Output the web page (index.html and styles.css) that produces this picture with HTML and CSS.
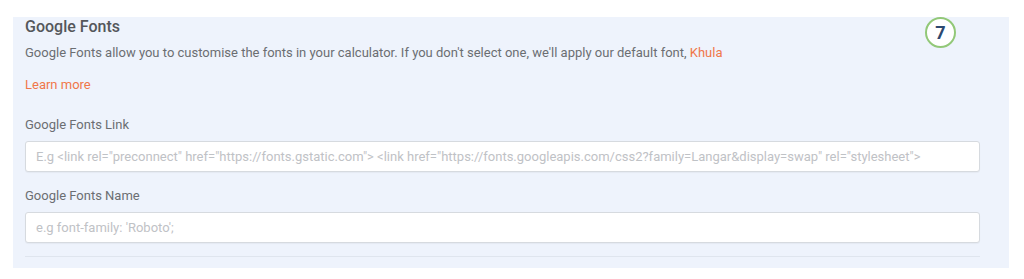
FILE: index.html
```html
<!DOCTYPE html>
<html lang="en">
<head>
    <meta charset="UTF-8">
    <title>Google Fonts</title>
    <link rel="stylesheet" href="styles.css">
</head>
<body>
    <section class="panel">
        <span class="step-badge">7</span>
        <h2 class="panel-title">Google Fonts</h2>
        <p class="panel-desc">Google Fonts allow you to customise the fonts in your calculator. If you don't select one, we'll apply our default font, <span class="accent">Khula</span></p>
        <a href="#" class="learn-more">Learn more</a>

        <div class="form-group">
            <label for="font-link">Google Fonts Link</label>
            <input type="text" id="font-link" placeholder="E.g <link rel=&quot;preconnect&quot; href=&quot;https://fonts.gstatic.com&quot;> <link href=&quot;https://fonts.googleapis.com/css2?family=Langar&amp;display=swap&quot; rel=&quot;stylesheet&quot;>">
        </div>
        <div class="form-group">
            <label for="font-name">Google Fonts Name</label>
            <input type="text" id="font-name" placeholder="e.g font-family: 'Roboto';">
        </div>
        <hr class="divider">
    </section>
</body>
</html>
```

FILE: styles.css
```css
:root {
    --panel-bg: #eef3fc;
    --title-color: #54575b;
    --text-color: #6b6e72;
    --accent-color: #f0774a;
    --border-color: #d6dadf;
}
body {
    margin: 0;
    background: #fff;
    font-family: Roboto, 'Liberation Sans', Arial, sans-serif;
    color: var(--text-color);
}
.panel {
    position: relative;
    margin: 17px 15px 12px 13px;
    padding: 0 29px 11px 12px;
    background: var(--panel-bg);
}
.step-badge {
    position: absolute;
    top: 0;
    right: 53px;
    width: 27px;
    height: 27px;
    border: 2px solid #92c878;
    border-radius: 50%;
    background: #fff;
    color: #2c4870;
    font-weight: 700;
    font-size: 18px;
    line-height: 27px;
    text-align: center;
}
.panel-title {
    margin: 0;
    font-size: 16px;
    font-weight: 500;
    line-height: 20px;
    color: var(--title-color);
}
.panel-desc {
    margin: 7px 0 0;
    font-size: 13px;
    line-height: 18px;
}
.accent {
    color: var(--accent-color);
}
.learn-more {
    display: block;
    margin-top: 14px;
    font-size: 13px;
    line-height: 18px;
    color: var(--accent-color);
    text-decoration: none;
}
.form-group {
    margin-top: 22px;
}
.form-group + .form-group {
    margin-top: 15px;
}
.form-group label {
    display: block;
    margin-bottom: 7px;
    font-size: 13px;
    line-height: 18px;
    color: var(--text-color);
}
.form-group input {
    box-sizing: border-box;
    width: 100%;
    height: 31px;
    padding: 0 10px;
    border: 1px solid var(--border-color);
    border-radius: 3px;
    background: #fff;
    box-shadow: 0 1px 1px rgba(0, 0, 0, 0.04);
    font-family: inherit;
    font-size: 13px;
    color: #444;
}
.form-group input::placeholder {
    color: #bfc2c6;
}
.divider {
    margin: 13px 0 0;
    border: none;
    border-top: 1px solid #dfe5ee;
}
```
